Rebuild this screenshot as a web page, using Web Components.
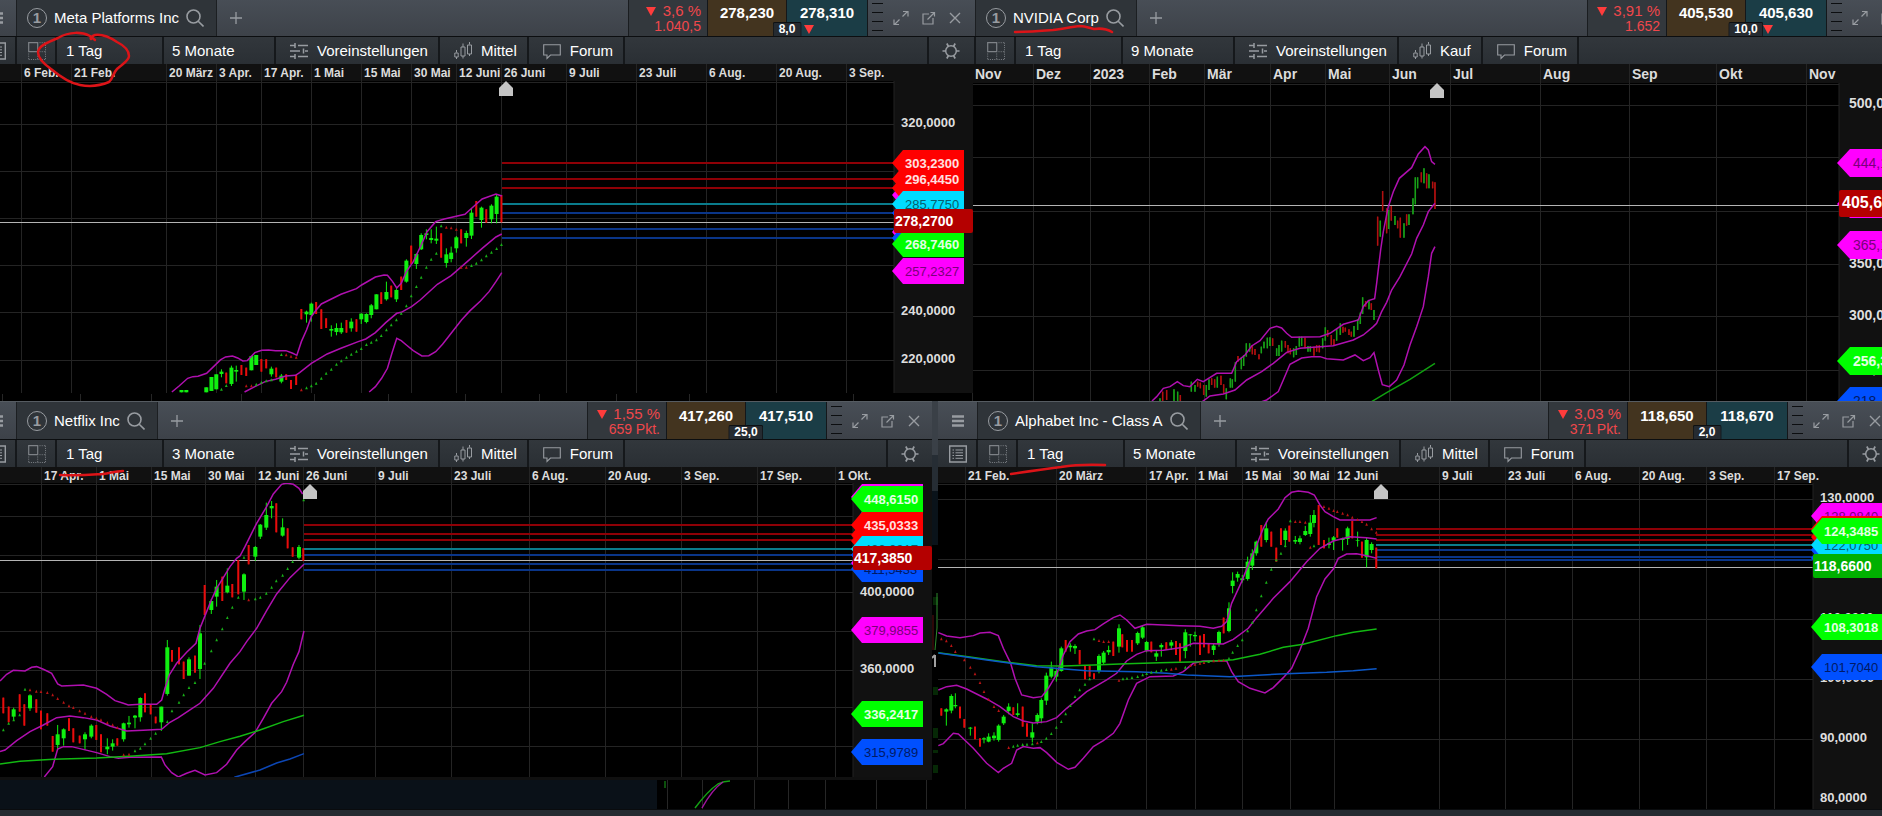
<!DOCTYPE html>
<html lang="de">
<head>
<meta charset="utf-8">
<title>Charts</title>
<style>
  body {
    margin: 0;
    background: #000;
    overflow: hidden;
    font-family: "Liberation Sans", Arial, sans-serif;
    font-size: 15px;
    color: #fff;
  }
</style>
</head>
<body>
<trading-desktop>
  <chart-window slot="top" class="front" name="Meta Platforms Inc" range="5 Monate" mode="Mittel">
    <price-quote slot="quote" percent="3,6 %" points="1.040,5" sell="278,230" buy="278,310" spread="8,0" falling></price-quote>
    <price-chart chart="meta"></price-chart>
  </chart-window>
  <chart-window slot="top" name="NVIDIA Corp" range="9 Monate" mode="Kauf">
    <price-quote slot="quote" percent="3,91 %" points="1.652" sell="405,530" buy="405,630" spread="10,0" falling></price-quote>
    <price-chart chart="nvidia"></price-chart>
  </chart-window>
  <chart-window slot="bottom" class="front" name="Netflix Inc" range="3 Monate" mode="Mittel">
    <price-quote slot="quote" percent="1,55 %" points="659 Pkt." sell="417,260" buy="417,510" spread="25,0"></price-quote>
    <price-chart chart="netflix"></price-chart>
  </chart-window>
  <chart-window slot="bottom" name="Alphabet Inc - Class A" range="5 Monate" mode="Mittel">
    <price-quote slot="quote" percent="3,03 %" points="371 Pkt." sell="118,650" buy="118,670" spread="2,0"></price-quote>
    <price-chart chart="alphabet"></price-chart>
  </chart-window>
</trading-desktop>

<script>
const ICONS = {
  menu: '<path d="M3 4.500h12M3 9h12M3 13.500h12" stroke-width="2.600"/>',
  list: '<path d="M.7 1h16.600v16H.7z" stroke-width="1.400"/><path d="M6.500 5H14M6.500 7.800H14M6.500 10.500H14M6.500 13.300H14M3.500 5H5M3.500 7.800H5M3.500 10.500H5M3.500 13.300H5"/>',
  grid: '<g opacity=".75"><path d="M.7.700h9v9h-9z" stroke-width="1.200"/><path d="M11.500.700h6M17.500.700v17M.7 17.500h17M.7 11.500v6M9.700 11.500v6M11.500 9.700h6" stroke-dasharray="1 1.200"/></g>',
  sliders: '<path d="M0 3.500h5M8 3.500h10M0 9h10M15 9h3M0 14.500h5M8 14.500h10" stroke-width="1.400"/><path d="M5 1v5M13.500 6.500v5M5 12v5" stroke-width="1.500"/>',
  candles: '<path d="M2.500 8v2.500M.8 11h3.400v4H.8zM2.500 15v2M9 1.500V5M7 5h4v9H7zM9 14v2.500M15.500 0v2.500M13.500 3h4v9h-4zM15.500 12v2"/>',
  forum: '<path d="M.7 2.700h16.600v10.300H7.500L4 16.500V13H.7z" stroke-width="1.100"/>',
  gear: '<circle cx="9" cy="9" r="5.300" stroke-width="1.500"/><path d="M14 9h3.500M.5 9H4M11.500 13.500l1.700 3M6.500 4.500l-1.700-3M11.500 4.500l1.700-3M6.500 13.500l-1.700 3" stroke-width="1.700"/>',
  search: '<circle cx="7.500" cy="7.500" r="6.500" stroke-width="1.600"/><path d="M12.200 12.200l5.300 5.300" stroke-width="1.600"/>',
  plus: '<path d="M9 3v12M3 9h12" stroke-width="1.300"/>',
  expand: '<path d="M10.500 7.500l5-5M11 2.500h5v5M7.500 10.500l-5 5M2 10.500v5h5" stroke-width="1.200"/>',
  popout: '<path d="M10 5H4v10h10V9M8.500 10.500l7-7M11.500 3.500h4v4" stroke-width="1.200"/>',
  close: '<path d="M4 4l10 10M14 4L4 14" stroke-width="1.400"/>'
};

// Dates are [x, label]; lines are polylines, candles are
// "colour x high low [bodyTop bodyBottom]", dots are "colour x y".
const CHARTS = {
  meta: {
    origin: [-23, 64], head: 17, axis: 79, size: 12, price: 222, home: [506, 81], start: 502,
    dates: [[21, '6 Feb.'], [71, '21 Feb.'], [166, '20 März'], [216, '3 Apr.'], [261, '17 Apr.'], [311, '1 Mai'], [361, '15 Mai'], [411, '30 Mai'], [456, '12 Juni'], [501, '26 Juni'], [566, '9 Juli'], [636, '23 Juli'], [706, '6 Aug.'], [776, '20 Aug.'], [846, '3 Sep.']],
    rows: [124, 171, 218, 265, 312, 360],
    labels: [[123, '320,0000'], [311, '240,0000'], [359, '220,0000']],
    levels: [[163, 'red'], [179, 'red'], [188, 'red'], [204, 'cyan'], [213, 'blue'], [229, 'blue'], [238, 'blue']],
    tags: [[195, 'magenta', ''], [188, 'red', ''], [163, 'red', '303,2300'], [179, 'red', '296,4450'], [213, 'blue', ''], [232, 'magenta', ''], [238, 'blue', ''], [204, 'cyan', '285,7750'], [244, 'lime', '268,7460'], [271, 'magenta', '257,2327']],
    last: [221, '278,2700', '#b40000'],
    space: 'translate(0 100) scale(.3444 .3333)',
    lines: [
      ['#b010b0', '499,876 520,858 545,835 560,830 575,829 600,820 620,800 640,780 655,771 675,768 690,774 705,783 718,782 740,758 760,751 780,750 800,752 830,752 850,760 862,766 875,725 890,690 904,650 918,630 933,612 990,583 1035,566 1050,555 1090,531 1115,525 1125,526 1140,545 1152,564 1165,550 1180,515 1200,485 1223,435 1240,395 1265,365 1290,357 1350,343 1380,315 1400,297 1440,282 1457,288'],
      ['#b010b0', '710,876 740,860 770,845 800,838 830,828 858,826 870,818 904,790 950,762 990,745 1040,725 1062,717 1090,698 1120,668 1152,640 1165,637 1195,620 1220,600 1270,553 1310,527 1360,482 1400,445 1440,411 1457,402'],
      ['#b010b0', '1072,876 1090,860 1108,835 1125,805 1138,760 1152,715 1165,722 1180,735 1200,752 1225,768 1245,767 1265,755 1285,733 1310,700 1340,660 1365,632 1395,603 1420,575 1440,545 1457,518']
    ],
    candles: 'g 527 870 877,g 541 870 877,g 599 862 877,g 614 831 873,g 628 823 868,g 643 808 832 815 822,r 657 818 850,g 672 797 858 803 852,g 686 797 845 810 815,r 701 795 825,r 715 803 828,g 730 768 811,g 744 765 795,r 759 777 815,r 773 778 805,g 788 800 830 806 823,r 802 803 832,g 817 822 850 827 845,r 831 823 840,r 845 840 867,r 860 825 855,r 875 627 658,g 890 632 668 635 643,g 904 608 665 611 645,r 918 606 642,r 933 628 687,r 947 655 684,g 962 676 710 687 692,g 977 670 706 684 696,g 991 668 702 684 697,r 1006 660 698,g 1020 655 695 665 685,r 1035 658 695,g 1049 640 672 641 658,g 1064 640 670 642 666,g 1078 612 655 616 645,g 1093 583 628,r 1107 577 612,g 1122 545 602 576 598,r 1136 557 592,g 1151 565 606 570 598,r 1165 530 570,g 1180 478 548 482 545,r 1194 437 492,g 1209 460 507 462 492,g 1223 400 450 405 448,g 1238 388 418 400 405,g 1252 388 430 414 420,g 1267 380 432 416 422,r 1281 400 473,g 1296 445 503 463 489,g 1310 440 487 458 477,g 1325 408 458 412 445,r 1339 388 430,g 1354 392 440 399 414,g 1369 325 417 338 407,r 1383 303 350,g 1398 320 383 323 360,r 1412 328 368,g 1427 313 370 317 358,g 1442 285 370 290 342,r 1456 285 367',
    dots: 'g 643 868,g 657 857,r 715 858,r 730 858,g 744 853,g 759 847,g 773 843,g 788 840,g 817 764,r 831 765,r 845 769,r 860 772,r 875 870,g 890 864,g 904 858,g 918 850,g 933 835,g 947 820,g 962 808,g 977 793,g 991 783,g 1006 772,g 1020 763,g 1035 754,g 1049 746,g 1064 734,g 1078 727,g 1093 720,g 1107 707,g 1122 690,g 1136 675,g 1151 660,g 1165 640,g 1180 618,g 1194 588,g 1209 560,g 1223 532,g 1238 502,g 1252 478,g 1267 460,g 1281 378,r 1296 382,r 1310 384,r 1325 388,r 1339 502,r 1354 502,g 1369 497,g 1383 490,g 1398 480,g 1412 468,g 1427 457,g 1442 446,g 1456 434'
  },
  nvidia: {
    origin: [936, 64], head: 19, axis: 93, size: 14, thin: true, price: 205, home: [1437, 83], start: 1435,
    dates: [[972, 'Nov'], [1033, 'Dez'], [1090, '2023'], [1149, 'Feb'], [1204, 'Mär'], [1270, 'Apr'], [1325, 'Mai'], [1389, 'Jun'], [1450, 'Jul'], [1540, 'Aug'], [1629, 'Sep'], [1716, 'Okt'], [1806, 'Nov']],
    rows: [105, 157, 211, 264, 316, 370],
    labels: [[104, '500,0000'], [211, '400,0000'], [264, '350,0000'], [316, '300,0000'], [369, '250,0000']],
    levels: [],
    tags: [[163, 'magenta', '444,1280'], [204, 'magenta', ''], [245, 'magenta', '365,1140'], [361, 'lime', '256,3320'], [401, 'blue', '218,4480']],
    last: [203, '405,6300', '#b40000'],
    space: 'translate(1120 90) scale(.3333)',
    lines: [
      ['#b010b0', '96,933 110,920 130,895 150,890 172,875 190,887 210,890 232,868 250,875 290,850 335,850 350,815 375,795 395,768 420,752 450,715 470,709 485,714 500,730 515,742 600,740 630,730 670,703 715,690 730,650 745,632 764,626 770,580 782,480 790,425 805,350 820,305 838,265 875,233 895,192 915,170 925,180 935,215 945,223'],
      ['#b010b0', '247,935 270,918 310,912 345,900 380,870 425,845 460,820 500,787 540,775 640,767 700,750 730,735 760,710 770,700 785,665 800,637 815,600 840,560 875,492 890,445 910,405 925,365 945,340'],
      ['#b010b0', '420,937 440,930 475,905 490,870 510,823 545,804 575,800 600,800 620,806 670,810 705,795 730,812 750,803 762,788 775,840 787,884 808,890 830,870 852,825 870,765 890,710 910,650 925,560 935,490 945,470'],
      ['#10a010', '755,935 800,908 870,868 945,820']
    ],
    candles: 'g 120 925 935,r 128 905 935,r 140 900 930,g 162 898 938,g 173 905 938,r 181 915 938,g 214 875 905,g 225 885 905,r 233 875 890,r 241 878 895,r 251 885 915,g 259 885 920,g 267 868 900,r 275 865 885,r 284 868 893,g 292 860 893,r 303 857 885,r 311 883 910,g 319 895 928,g 331 865 893,g 337 868 893,g 346 817 875,r 354 798 815,g 364 803 838,g 371 795 828,g 379 760 800,g 389 760 785,r 397 765 793,r 405 777 795,r 417 793 808,g 424 770 790,g 432 755 775,g 442 743 775,g 450 742 768,r 458 745 768,g 470 775 798,g 477 765 798,g 485 752 785,r 496 753 773,r 504 765 790,r 511 775 793,g 521 775 802,g 529 768 795,g 538 740 770,g 545 740 768,r 555 743 775,g 564 768 785,g 571 768 785,r 582 770 797,r 590 765 785,r 598 765 787,g 608 745 775,g 616 712 752,r 623 720 740,r 634 735 765,r 642 748 767,g 650 717 752,g 661 700 735,r 669 710 728,r 676 713 725,r 687 718 735,r 694 725 740,g 702 708 740,g 713 688 720,g 721 668 702,g 728 622 672,r 737 633 650,g 747 630 658,r 754 640 660,g 762 660 690,r 773 380 467,g 781 392 440,r 788 303 363,r 800 355 430,g 806 360 417,r 814 348 392,g 825 378 405,r 833 392 415,r 841 383 443,g 852 400 443,r 860 373 407,g 867 373 405,g 879 325 373,g 886 262 343,g 893 262 295,r 904 247 277,g 912 235 280,r 920 250 295,g 927 253 295,r 938 275 295,r 945 277 357',
    dots: ''
  },
  netflix: {
    origin: [-23, 467], head: 16, axis: 79, size: 12, price: 560, home: [310, 484], start: 304,
    dates: [[41, '17 Apr.'], [96, '1 Mai'], [151, '15 Mai'], [205, '30 Mai'], [255, '12 Juni'], [303, '26 Juni'], [375, '9 Juli'], [451, '23 Juli'], [529, '6 Aug.'], [605, '20 Aug.'], [681, '3 Sep.'], [757, '17 Sep.'], [835, '1 Okt.']],
    rows: [516, 555, 592, 631, 670, 707, 746],
    labels: [[514, '440,0000'], [592, '400,0000'], [669, '360,0000']],
    levels: [[525, 'red'], [534, 'red'], [540, 'red'], [549, 'cyan'], [555, 'blue'], [564, 'blue'], [570, 'blue']],
    tags: [[497, 'magenta', ''], [499, 'lime', '448,6150'], [541, 'red', ''], [535, 'red', ''], [525, 'red', '435,0333'], [555, 'blue', ''], [549, 'cyan', '423,0917'], [563, 'magenta', ''], [569, 'blue', '411,5433'], [630, 'magenta', '379,9855'], [714, 'lime', '336,2417'], [752, 'blue', '315,9789']],
    last: [558, '417,3850', '#b40000'],
    space: 'translate(0 395) scale(.3333)',
    lines: [
      ['#b010b0', '0,858 20,838 40,826 75,828 95,817 110,815 130,823 155,835 173,867 185,873 250,870 290,880 320,898 345,917 370,925 385,930 420,928 470,928 485,915 495,880 508,840 530,805 560,772 588,745 600,700 614,665 634,615 650,580 670,548 690,515 710,490 720,483 735,455 750,425 770,385 800,335 820,297 845,268 860,264 880,268 897,280 908,297'],
      ['#b010b0', '0,1070 15,1065 50,1037 90,1010 130,990 170,968 210,963 250,968 290,975 330,993 380,1008 430,1006 485,1003 510,982 535,968 570,945 600,925 640,880 690,805 720,770 740,740 770,700 800,647 830,597 870,548 912,508'],
      ['#b010b0', '133,1146 158,1115 173,1062 190,1055 215,1055 290,1073 330,1085 355,1090 390,1087 484,1086 495,1110 515,1133 535,1146 560,1135 585,1126 615,1140 650,1133 680,1108 710,1065 735,1040 765,1013 790,970 815,925 845,890 860,862 880,808 897,770 912,708'],
      ['#12b812', '0,1107 60,1099 160,1093 290,1089 400,1083 500,1076 600,1058 660,1040 720,1024 780,1005 850,980 912,961'],
      ['#0c46b4', '703,1147 780,1125 830,1104 870,1092 912,1076']
    ],
    candles: 'r 10 908 955,r 26 935 982,g 41 938 978 943 965,r 59 898 950,r 73 928 992,g 90 898 948 901 940,r 109 913 953,r 123 947 1003,r 142 955 992,r 158 1023 1070,g 173 990 1062 1018 1050,g 191 1000 1052 1003 1030,r 207 970 1008,r 220 1000 1042,r 239 1022 1045,g 255 1012 1065 1018 1033,g 274 988 1030 992 1025,r 289 990 1035,r 303 1018 1072,g 322 1030 1078 1055 1063,g 338 1033 1067 1045 1055,r 352 1030 1052,g 371 983 1040 985 1033,g 387 963 998 983 988,g 405 960 1000 962 968,g 421 907 980 909 967,r 435 895 952,r 452 930 958,r 467 965 985,g 484 935 1008 935 982,g 502 735 902 757 897,r 516 765 800,r 537 757 808,r 551 800 852,g 567 787 842 793 842,r 585 782 833,g 600 690 852 715 822,r 614 570 660,g 634 612 657 618 645,g 650 555 635 575 605,r 667 545 618,g 682 520 595 572 592,r 697 567 607,r 715 495 598,g 732 535 615 538 590,r 746 450 508,g 766 453 498 456 485,g 781 387 432 389 425,g 799 323 405 360 398,g 815 318 370 333 340,r 829 325 412,g 848 370 425 397 422,r 863 400 460,r 878 457 485,g 897 450 493 456 488,r 910 460 497',
    dots: 'g 10 1005,g 26 985,g 41 975,g 59 960,g 75 883,r 90 885,r 109 889,r 123 890,r 142 893,r 158 900,r 173 911,r 191 922,r 207 933,r 220 938,r 239 948,r 255 955,r 274 965,r 289 970,r 303 975,r 322 983,r 338 990,r 352 998,r 371 1080,r 387 1078,g 405 1068,g 421 1060,g 435 1047,g 452 1030,g 467 1015,g 502 980,g 516 948,g 537 922,g 551 900,g 567 878,g 585 863,g 614 805,g 634 768,g 650 735,g 667 702,g 682 668,g 697 637,g 715 607,g 732 487,r 746 615,g 766 612,g 781 607,g 799 595,g 815 577,g 829 558,g 848 541,g 863 521,g 878 500,g 911 315'
  },
  alphabet: {
    origin: [938, 467], head: 16, axis: 80, size: 12, price: 567, home: [1381, 484], start: 1376,
    dates: [[965, '21 Feb.'], [1056, '20 März'], [1146, '17 Apr.'], [1195, '1 Mai'], [1242, '15 Mai'], [1290, '30 Mai'], [1334, '12 Juni'], [1439, '9 Juli'], [1505, '23 Juli'], [1572, '6 Aug.'], [1639, '20 Aug.'], [1706, '3 Sep.'], [1774, '17 Sep.']],
    rows: [499, 559, 619, 679, 739],
    labels: [[498, '130,0000'], [618, '110,0000'], [678, '100,0000'], [738, '90,0000'], [798, '80,0000']],
    levels: [[529, 'red'], [535, 'red'], [540, 'red'], [545, 'cyan'], [550, 'blue'], [557, 'blue'], [560, 'blue']],
    tags: [[516, 'magenta', '128,0840'], [537, 'red', ''], [529, 'red', ''], [550, 'blue', ''], [558, 'blue', ''], [545, 'cyan', '122,0750'], [531, 'lime', '124,3485'], [627, 'lime', '108,3018'], [667, 'blue', '101,7040']],
    last: [566, '118,6600', '#00b000'],
    space: 'translate(920 395) scale(.3333)',
    lines: [
      ['#b010b0', '55,713 80,723 120,728 160,722 180,714 210,712 235,722 250,760 272,805 285,850 305,900 340,908 365,905 385,880 410,838 430,780 450,740 475,717 500,708 525,704 550,687 580,668 600,660 620,675 645,700 665,693 680,688 780,692 840,694 880,700 905,694 920,680 935,625 965,560 985,510 1010,450 1030,400 1045,372 1075,342 1095,308 1115,292 1135,288 1165,292 1183,300 1200,330 1215,350 1240,365 1260,375 1300,375 1350,375 1370,368'],
      ['#b010b0', '55,885 80,875 110,871 140,882 200,912 240,935 280,965 310,978 340,984 380,980 410,968 440,940 500,890 560,855 590,835 620,798 650,778 680,767 730,766 790,757 820,745 910,747 940,733 985,700 1010,668 1060,610 1110,560 1160,500 1200,460 1240,438 1290,425 1340,428 1370,432'],
      ['#b010b0', '55,1052 70,1046 100,1015 115,1017 160,1060 200,1105 235,1133 250,1120 275,1105 290,1065 310,1055 340,1060 360,1058 380,1073 410,1102 445,1123 465,1117 490,1090 520,1055 550,1037 580,1015 600,985 625,915 650,865 690,845 760,843 790,830 820,805 850,798 920,797 935,830 955,860 990,880 1035,894 1060,878 1090,848 1115,820 1140,765 1165,700 1190,605 1215,552 1240,522 1255,490 1280,477 1310,476 1340,482 1370,490'],
      ['#12b812', '55,773 150,786 250,800 350,812 430,813 520,810 620,806 720,803 840,800 940,794 1020,778 1090,757 1150,748 1250,722 1300,712 1370,702'],
      ['#0c58c8', '55,774 200,795 350,815 500,827 650,830 740,835 800,840 930,845 1080,837 1220,832 1300,827 1370,821']
    ],
    candles: 'r 64 940 962,g 79 940 992 943 950,g 94 898 955 903 947,g 106 895 940 930 934,r 120 935 970,r 133 972 998,g 151 996 1022 998 1001,r 165 995 1033,r 180 1030 1055,g 192 1027 1045 1030 1033,g 206 1015 1042 1025 1040,g 222 1012 1037 1022 1030,g 236 988 1040 992 1035,g 251 960 990 965 985,g 266 925 958 935 948,r 280 937 960,g 293 925 965 955 960,r 308 935 995,r 321 985 1025,g 337 985 1042 1012 1028,g 352 955 988 960 980,g 364 910 985 915 970,g 379 833 930 842 917,g 394 800 850 817 845,g 409 822 860 828 845,g 424 755 830 760 828,r 437 735 770,g 451 745 770 752 757,g 465 748 777 753 760,r 479 765 808,r 495 810 853,r 509 812 845,r 522 835 852,g 537 778 835 783 828,g 551 768 808 773 803,g 566 752 780 765 772,r 580 740 783,g 597 688 773 700 755,r 607 718 757,r 621 735 770,r 636 735 770,g 653 710 750 714 745,g 668 692 732 697 728,g 680 738 772 741 767,r 694 740 772,g 709 768 798 775 785,g 724 745 785 750 757,r 739 742 765,g 754 735 765 742 752,r 768 738 780,r 780 745 800,g 796 703 790 712 768,g 811 717 755 718 721,g 825 710 738 720 724,r 840 722 780,r 852 717 757,r 866 745 775,g 881 745 780 752 765,g 897 707 755 711 747,r 911 668 715,g 927 622 712 640 708,g 938 532 595 557 573,g 953 530 560 537 548,g 967 540 563 550 556,g 983 485 557 500 552,g 997 463 525 475 512,g 1009 437 482 440 475,r 1024 390 455,g 1039 380 442 400 435,r 1054 410 455,r 1069 458 500,r 1083 400 450,g 1096 400 457 407 435,r 1108 392 440,g 1126 423 447 435 440,g 1140 422 448 430 441,g 1156 393 423 408 420,g 1171 360 425 383 417,g 1182 345 397 360 384,r 1196 330 450,r 1212 435 460,g 1227 428 460 445 450,g 1241 423 465 427 437,r 1252 400 428,g 1268 428 467 430 435,g 1283 395 450 400 432,r 1297 378 430,g 1313 410 455 435 437,r 1326 440 488,g 1340 428 517 435 487,g 1355 442 475 447 465,r 1369 458 520',
    dots: 'r 64 732,r 79 738,r 94 752,r 106 770,r 133 795,r 151 817,r 165 837,r 180 863,r 192 890,r 206 913,r 222 935,r 236 947,r 266 1058,g 280 1054,g 293 1051,g 308 1049,g 321 1048,g 337 1047,r 352 1044,g 364 1040,g 379 1030,g 394 1016,g 409 997,g 424 980,g 437 957,g 451 932,g 465 905,g 479 885,g 495 868,g 509 852,g 522 732,r 537 737,r 551 740,r 566 740,r 597 856,g 609 852,g 621 850,g 636 848,g 653 845,g 668 840,g 680 836,g 694 832,g 709 829,g 724 826,g 739 824,r 754 823,r 768 820,g 796 817,r 811 812,r 825 808,r 840 805,r 852 803,g 866 800,r 881 798,r 897 797,r 911 796,g 927 790,g 938 772,g 953 752,g 967 735,g 983 708,g 997 682,g 1009 645,g 1024 603,g 1039 562,g 1054 523,g 1069 495,g 1083 475,g 1096 452,g 1111 378,r 1126 380,r 1140 380,r 1156 382,r 1171 457,g 1182 453,r 1212 335,r 1227 340,r 1241 347,r 1252 350,r 1268 355,r 1283 360,r 1297 367,r 1313 374,r 1326 380,r 1340 388,r 1355 402,r 1369 412'
  }
};

const TAG_COLORS = { red: '#ff0000', cyan: '#00dcff', blue: '#0050ff', magenta: '#ff00ff', lime: '#00ff00' };
const TAG_TEXT = { red: '#ffe0e0', cyan: '#05606e', blue: '#001a66', magenta: '#7a007a', lime: '#e4ffe4' };
const LEVEL_COLORS = { red: '#8e0006', cyan: '#0a7c8c', blue: '#0a3588' };

class ToolIcon extends HTMLElement {
  constructor() {
    super();
    this.attachShadow({ mode: 'open' });
  }

  connectedCallback() {
    this.shadowRoot.innerHTML = `
      <style>
        :host { display: block; flex: none; width: 18px; height: 18px; color: #989ca1; }
        svg { display: block; fill: none; stroke: currentColor; }
      </style>
      <svg width="18" height="18" viewBox="0 0 18 18" aria-hidden="true">${ICONS[this.getAttribute('name')]}</svg>
    `;
  }
}

customElements.define('tool-icon', ToolIcon);

class PriceQuote extends HTMLElement {
  constructor() {
    super();
    this.attachShadow({ mode: 'open' });
  }

  connectedCallback() {
    const get = name => this.getAttribute(name);
    this.shadowRoot.innerHTML = `
      <style>
        :host { display: flex; position: relative; flex: none; height: 100%; }
        .change {
          box-sizing: border-box;
          width: 79px;
          padding: 4px 6px 0 0;
          border-left: 1px solid #1a1d20;
          background: #33383d;
          color: #f0474b;
          text-align: right;
          line-height: 16px;
        }
        .points { font-size: 14px; line-height: 15px; }
        .down {
          display: inline-block;
          border: 5px solid transparent;
          border-top: 9px solid #ff3c3c;
          border-bottom: 0;
          margin-right: 2px;
        }
        button {
          width: 79px;
          padding: 0 0 10px;
          border: 0;
          border-left: 1px solid #14171a;
          color: #fff;
          font: bold 15px "Liberation Sans", Arial, sans-serif;
        }
        .sell { background: #43341f; }
        .buy { width: 82px; background: #1b3d46; border-right: 1px solid #14171a; }
        .spread {
          position: absolute;
          left: 159px;
          bottom: 0;
          transform: translateX(-50%);
          box-sizing: border-box;
          height: 14px;
          padding: 0 5px;
          border: 1px solid #0d1013;
          border-bottom: 0;
          border-radius: 2px 2px 0 0;
          background: #252b31;
          font-size: 12px;
          font-weight: bold;
          line-height: 13px;
        }
        .spread + .down { position: absolute; left: 176px; bottom: 2px; margin: 0; }
        .grip { width: 19px; display: flex; flex-direction: column; gap: 8px; padding: 4px 4px 0; box-sizing: border-box; }
        .grip i { height: 1px; background: #0c0e10; }
      </style>
      <div class="change">
        <div><span class="down"></span> ${get('percent')}</div>
        <div class="points">${get('points')}</div>
      </div>
      <button class="sell">${get('sell')}</button>
      <button class="buy">${get('buy')}</button>
      <span class="spread">${get('spread')}</span>
      ${this.hasAttribute('falling') ? '<span class="down"></span>' : ''}
      <div class="grip"><i></i><i></i><i></i><i></i></div>
    `;
  }
}

customElements.define('price-quote', PriceQuote);

class ChartWindow extends HTMLElement {
  constructor() {
    super();
    this.attachShadow({ mode: 'open' });
  }

  connectedCallback() {
    const get = name => this.getAttribute(name);
    this.shadowRoot.innerHTML = `
      <style>
        :host {
          display: flex;
          flex-direction: column;
          flex: 1 1 0;
          min-width: 0;
          box-sizing: border-box;
          position: relative;
          overflow: hidden;
          background: #101010;
        }
        header, nav { display: flex; flex: none; }
        header {
          height: 39px;
          box-sizing: border-box;
          border-top: 1px solid #565c62;
          border-bottom: 1px solid #0c0e10;
          background: linear-gradient(#484e56, #3d4249);
        }
        button, select {
          margin: 0;
          border: 0;
          border-radius: 0;
          background: none;
          color: inherit;
          font: inherit;
        }
        header > button { display: flex; align-items: center; justify-content: center; padding: 0; width: 27px; }
        header > .menu { width: 39px; }
        header > .add { width: 38px; }
        header > .close { margin-right: 5px; }
        .tab {
          display: flex;
          align-items: center;
          gap: 7px;
          padding: 0 12px 0 10px;
          border: 1px solid #1c1f22;
          border-width: 0 1px;
          background: #2f3439;
        }
        .tab b {
          box-sizing: border-box;
          width: 20px;
          height: 20px;
          border: 1px solid #989ca1;
          border-radius: 50%;
          color: #989ca1;
          line-height: 18px;
          text-align: center;
        }
        .fill { flex: 1; }
        nav { height: 27px; background: linear-gradient(#32373c, #2a2f34); }
        nav > * { box-sizing: border-box; }
        nav > button {
          display: flex;
          align-items: center;
          gap: 9px;
          padding: 0 10px 0 14px;
          border-right: 2px solid #15181b;
        }
        nav > .square { width: 40px; padding: 0 0 0 11px; }
        nav > select {
          width: 107px;
          padding: 0 0 0 9px;
          border-right: 2px solid #15181b;
          appearance: none;
        }
        nav > .range { width: 112px; padding-left: 8px; }
        nav > .settings { width: 46px; padding: 0 0 0 13px; border: 0; border-left: 2px solid #15181b; }
      </style>
      <header>
        <button class="menu" aria-label="Menü"><tool-icon name="menu"></tool-icon></button>
        <div class="tab"><b>1</b><span>${get('name')}</span><tool-icon name="search"></tool-icon></div>
        <button class="add" aria-label="Tab hinzufügen"><tool-icon name="plus"></tool-icon></button>
        <span class="fill"></span>
        <slot name="quote"></slot>
        <button aria-label="Maximieren"><tool-icon name="expand"></tool-icon></button>
        <button aria-label="Abdocken"><tool-icon name="popout"></tool-icon></button>
        <button class="close" aria-label="Schließen"><tool-icon name="close"></tool-icon></button>
      </header>
      <nav>
        <button class="square" aria-label="Liste"><tool-icon name="list"></tool-icon></button>
        <button class="square" aria-label="Raster"><tool-icon name="grid"></tool-icon></button>
        <select aria-label="Intervall"><option>1 Tag</option></select>
        <select class="range" aria-label="Zeitraum"><option>${get('range')}</option></select>
        <button><tool-icon name="sliders"></tool-icon>Voreinstellungen</button>
        <button><tool-icon name="candles"></tool-icon>${get('mode')}</button>
        <button><tool-icon name="forum"></tool-icon>Forum</button>
        <span class="fill"></span>
        <button class="settings" aria-label="Einstellungen"><tool-icon name="gear"></tool-icon></button>
      </nav>
      <slot></slot>
    `;
  }
}

customElements.define('chart-window', ChartWindow);

class PriceChart extends HTMLElement {
  constructor() {
    super();
    this.attachShadow({ mode: 'open' });
  }

  connectedCallback() {
    this.chart = CHARTS[this.getAttribute('chart')];
    this.render();
  }

  grid() {
    const { origin: [ox, oy], dates, rows } = this.chart;
    const cols = dates.map(([x]) => `<line x1="${x - ox}" x2="${x - ox}" y1="0" y2="100%"/>`);
    const lines = rows.map(y => `<line x1="0" x2="100%" y1="${y - oy}" y2="${y - oy}"/>`);
    return cols.concat(lines).join('');
  }

  levels() {
    const { origin: [ox, oy], levels, start } = this.chart;
    return levels.map(([y, color]) =>
      `<line x1="${start - ox}" x2="100%" y1="${y - oy}" y2="${y - oy}" stroke="${LEVEL_COLORS[color]}" stroke-width="2"/>`
    ).join('');
  }

  candles() {
    const thin = this.chart.thin;
    return this.chart.candles.split(',').map(item => {
      const [c, x, high, low, top = high, bottom = low] = item.split(' ');
      const color = c === 'g' ? (thin ? '#18a018' : '#10f010') : (thin ? '#b01010' : '#e80c0c');
      const body = thin ? 1.5 : (c === 'g' ? 4 : 2);
      return `<path d="M${x} ${high}V${low}" stroke="${color}" stroke-width="1"/>
        <path d="M${x} ${top}V${bottom}" stroke="${color}" stroke-width="${body}"/>`;
    }).join('');
  }

  dots() {
    if (!this.chart.dots) return '';
    return this.chart.dots.split(',').map(item => {
      const [c, x, y] = item.split(' ');
      return `<path d="M${x} ${y - 5}l4 9h-8z" fill="${c === 'g' ? '#18b018' : '#b81414'}"/>`;
    }).join('');
  }

  // Neighbours of one colour merge: their texts go on top of all their shapes.
  tags() {
    const { tags, size, origin: [, oy] } = this.chart;
    const big = size > 12;
    const half = big ? 14 : 13;
    const body = big ? 11 : 9;
    let svg = '';
    let texts = '';
    tags.forEach(([y, color, text], i) => {
      const cy = y - oy;
      const light = color === 'red' || color === 'lime';
      svg += `<path d="M-2 ${cy}L${body} ${cy - half}H${big ? 86 : 70}V${cy + half}H${body}z" fill="${TAG_COLORS[color]}"/>`;
      if (text) {
        texts += `<text class="${light ? 'light' : ''}" x="${big ? 14 : 11}" y="${cy + 5}" fill="${TAG_TEXT[color]}">${text}</text>`;
      }
      if (!tags[i + 1] || tags[i + 1][1] !== color) {
        svg += texts;
        texts = '';
      }
    });
    return svg;
  }

  render() {
    const { origin: [ox, oy], head, axis, size, price, home, dates, labels, lines, last, space } = this.chart;
    const big = size > 12;
    const [lastY, lastText, lastColor] = last;
    this.shadowRoot.innerHTML = `
      <style>
        :host { display: block; flex: 1; min-height: 0; overflow: hidden; background: #000; }
        svg.chart { display: block; width: 100%; height: 100%; }
        .grid { stroke: #242424; shape-rendering: crispEdges; }
        .series path, .series polyline { vector-effect: non-scaling-stroke; fill: none; }
        .dots path { stroke: none; }
        .dates { font-size: ${big ? 14 : 12}px; font-weight: bold; fill: #dcdcdc; }
        .axis { font-size: ${big ? 14 : 13}px; }
        .axis .label { fill: #dedede; font-weight: bold; }
        .axis .light { font-weight: bold; }
        .axis .last { fill: #fff; font-size: ${big ? 16 : 14}px; font-weight: bold; }
      </style>
      <svg class="chart">
        <rect width="100%" height="${head}" fill="#111"/>
        <g class="grid">${this.grid()}<line x1="0" x2="100%" y1="${head + 1}" y2="${head + 1}"/></g>
        <g class="dates">${dates.map(([x, text]) => `<text x="${x - ox + 3}" y="${big ? 15 : 13}">${text}</text>`).join('')}</g>
        <svg y="${head}" width="100%" height="100%">
          <g transform="translate(0 ${-head})">
            ${this.levels()}
            <line x1="0" x2="100%" y1="${price - oy}" y2="${price - oy}" stroke="#b4b4b4" shape-rendering="crispEdges"/>
            <g class="series" transform="translate(${-ox} ${-oy}) ${space}">
              ${this.candles()}
              ${lines.map(([color, points]) => `<polyline points="${points}" stroke="${color}" stroke-width="1.500"/>`).join('')}
            </g>
            <g class="dots" transform="translate(${-ox} ${-oy}) ${space}">${this.dots()}</g>
            <path transform="translate(${home[0] - ox} ${home[1] - oy})" d="M0 0l7 7v8H-7V7z" fill="#c4c4c4"/>
            <svg x="100%" overflow="visible" class="axis">
              <g transform="translate(${-axis} 0)">
                <rect y="${head}" width="${axis}" height="1000" fill="#111"/>
                <path d="M0 ${head}v1000" stroke="#222"/>
                ${labels.map(([y, text]) => `<text class="label" x="${big ? 10 : 7}" y="${y - oy + 4}">${text}</text>`).join('')}
                ${this.tags()}
                <rect y="${lastY - oy - (big ? 13 : 12)}" width="${axis}" height="${big ? 27 : 24}" rx="2" fill="${lastColor}"/>
                <text class="last" x="${big ? 3 : 1}" y="${lastY - oy + 5}">${lastText}</text>
              </g>
            </svg>
          </g>
        </svg>
      </svg>
    `;
  }
}

customElements.define('price-chart', PriceChart);

// Freehand red pen strokes drawn over all windows.
class PenMarks extends HTMLElement {
  constructor() {
    super();
    this.attachShadow({ mode: 'open' });
  }

  connectedCallback() {
    this.shadowRoot.innerHTML = `
      <style>
        :host { display: block; position: absolute; inset: 0; z-index: 5; pointer-events: none; }
        svg { width: 100%; height: 100%; fill: none; stroke: #dc1418; stroke-width: 2.500; stroke-linecap: round; stroke-linejoin: round; }
      </style>
      <svg aria-hidden="true">
        <path d="M95 40l-5-4c-8-4-20-5-32 2C46 43 39 46 38 52c0 6 6 12 13 17 6 5 17 14 29 16 11 2 22 0 29-3 4-3 4-9 8-13 5-5 12-8 12-13 0-6-4-10-12-14-6-4-15-8-22-7-3 1-5 3-4 4"/>
        <path d="M1015 32c14 0 26-1 38-2 9-1 18-3 27-4 6 0 9 2 14 3 7-1 13 0 18 3"/>
        <path d="M60 475c18 1 28 0 43-1 8-1 12-3 20-3"/>
        <path d="M1011 474c20-3 34-5 50-7 12-2 22-3 44-2"/>
      </svg>
    `;
  }
}

customElements.define('pen-marks', PenMarks);

// What shows of the covered windows behind the four charts.
class DesktopBackdrop extends HTMLElement {
  constructor() {
    super();
    this.attachShadow({ mode: 'open' });
  }

  connectedCallback() {
    const ticks = (xs, y1, y2) => xs.map(x => `<path d="M${x}.5 ${y1}V${y2}" stroke="#262626"/>`).join('');
    this.shadowRoot.innerHTML = `
      <style>
        :host { display: block; position: absolute; inset: 0; }
        svg { width: 100%; height: 100%; fill: none; }
      </style>
      <svg aria-hidden="true">
        ${ticks([2, 80, 151, 241, 314, 388, 465, 539, 616, 689, 853], 394, 401)}
        <path d="M0 779h657v30H0z" fill="#0a1118"/>
        ${ticks([667, 702, 754, 788, 825, 876, 926], 779, 809)}
        <path d="M695 808c6-8 14-18 23-24 4-2 8-3 12-3" stroke="#14a014" stroke-width="1.500"/>
        <path d="M702 808c5-9 12-20 21-26" stroke="#a014a0" stroke-width="1.500"/>
        <path d="M665 781v7" stroke="#18a018"/>
        <path d="M932 401h7v54h-7z" fill="#3a4047"/>
        <path d="M932 455h7v36h-7z" fill="#262d34"/>
        <path d="M932 491h7v54h-7z" fill="#0a131a"/>
        <path d="M933 597h5v8h-5zM933 687h5v8h-5zM933 728h5v10h-5zM933 750h5v3h-5zM933 765h5v8h-5z" fill="#062806"/>
        <path d="M937 593v35l-2 22" stroke="#2e8a2e"/>
        <path d="M933 615v35" stroke="#5a1010"/>
        <path d="M935 655v12M932 658l3-3" stroke="#a0a0a0" stroke-width="2"/>
      </svg>
    `;
  }
}

customElements.define('desktop-backdrop', DesktopBackdrop);

class TradingDesktop extends HTMLElement {
  constructor() {
    super();
    this.attachShadow({ mode: 'open' });
    this.shadowRoot.innerHTML = `
      <style>
        :host { display: block; position: relative; height: 100vh; overflow: hidden; }
        main {
          position: relative;
          display: grid;
          grid-template-rows: 403fr 408fr 7px;
          height: calc(100% + 2px);
          margin-top: -2px;
        }
        /* The outer windows run past the edges of the screen. */
        .row { display: flex; min-height: 0; }
        .top { margin: 0 -50px 0 -23px; }
        .bottom { margin: 0 -11px 0 -23px; gap: 6px; }
        ::slotted(.front) { z-index: 1; }
        .top ::slotted(.front) { margin: 0 -37px 8px 0; }
        .bottom ::slotted(.front) { margin-bottom: 29px; border-bottom: 3px solid #101010; }
        footer { border-top: 1px solid #0a0c0e; background: #262b31; }
      </style>
      <desktop-backdrop></desktop-backdrop>
      <main>
        <div class="row top"><slot name="top"></slot></div>
        <div class="row bottom"><slot name="bottom"></slot></div>
        <footer></footer>
      </main>
      <pen-marks></pen-marks>
    `;
  }
}

customElements.define('trading-desktop', TradingDesktop);
</script>
</body>
</html>
